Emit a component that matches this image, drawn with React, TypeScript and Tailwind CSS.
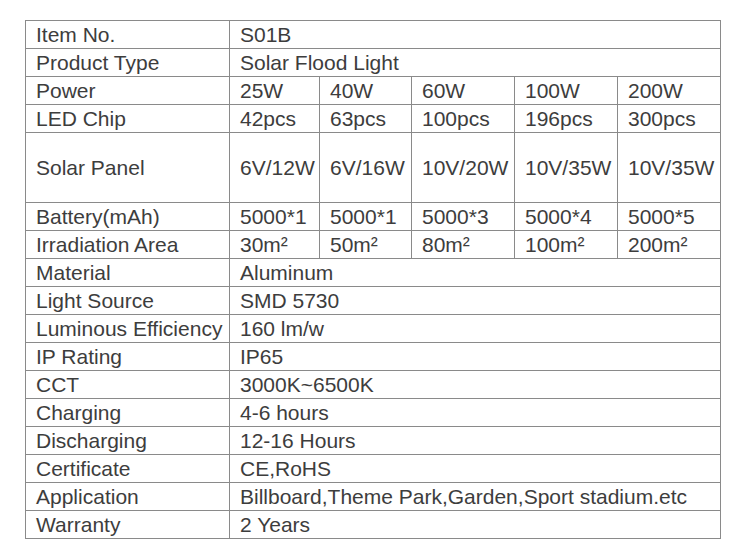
type Row = { label: string; values: string[]; tall?: boolean };

const rows: Row[] = [
  { label: "Item No.", values: ["S01B"] },
  { label: "Product Type", values: ["Solar Flood Light"] },
  { label: "Power", values: ["25W", "40W", "60W", "100W", "200W"] },
  { label: "LED Chip", values: ["42pcs", "63pcs", "100pcs", "196pcs", "300pcs"] },
  { label: "Solar Panel", values: ["6V/12W", "6V/16W", "10V/20W", "10V/35W", "10V/35W"], tall: true },
  { label: "Battery(mAh)", values: ["5000*1", "5000*1", "5000*3", "5000*4", "5000*5"] },
  { label: "Irradiation Area", values: ["30m²", "50m²", "80m²", "100m²", "200m²"] },
  { label: "Material", values: ["Aluminum"] },
  { label: "Light Source", values: ["SMD 5730"] },
  { label: "Luminous Efficiency", values: ["160 lm/w"] },
  { label: "IP Rating", values: ["IP65"] },
  { label: "CCT", values: ["3000K~6500K"] },
  { label: "Charging", values: ["4-6 hours"] },
  { label: "Discharging", values: ["12-16 Hours"] },
  { label: "Certificate", values: ["CE,RoHS"] },
  { label: "Application", values: ["Billboard,Theme Park,Garden,Sport stadium.etc"] },
  { label: "Warranty", values: ["2 Years"] },
];

const cell = "border border-[#8a8a8a] pl-[10px] pr-0 py-0 whitespace-nowrap overflow-hidden align-middle";

export default function App() {
  return (
    <div className="w-[735px] h-[556px] bg-white pt-[20px] pl-[25px] font-['Liberation_Sans',Arial,sans-serif] text-[21px] leading-[24px] text-[#3d3d3d]">
      <table className="table-fixed border-collapse w-[695px]">
        <colgroup>
          <col className="w-[204px]" />
          <col className="w-[90px]" />
          <col className="w-[92px]" />
          <col className="w-[103px]" />
          <col className="w-[103px]" />
          <col className="w-[103px]" />
        </colgroup>
        <tbody>
          {rows.map((r) => (
            <tr key={r.label} className={r.tall ? "h-[70px]" : "h-[28px]"}>
              <td className={cell}>{r.label}</td>
              {r.values.length === 1 ? (
                <td className={cell} colSpan={5}>
                  {r.values[0]}
                </td>
              ) : (
                r.values.map((v, i) => (
                  <td key={i} className={cell}>
                    {v}
                  </td>
                ))
              )}
            </tr>
          ))}
        </tbody>
      </table>
    </div>
  );
}
